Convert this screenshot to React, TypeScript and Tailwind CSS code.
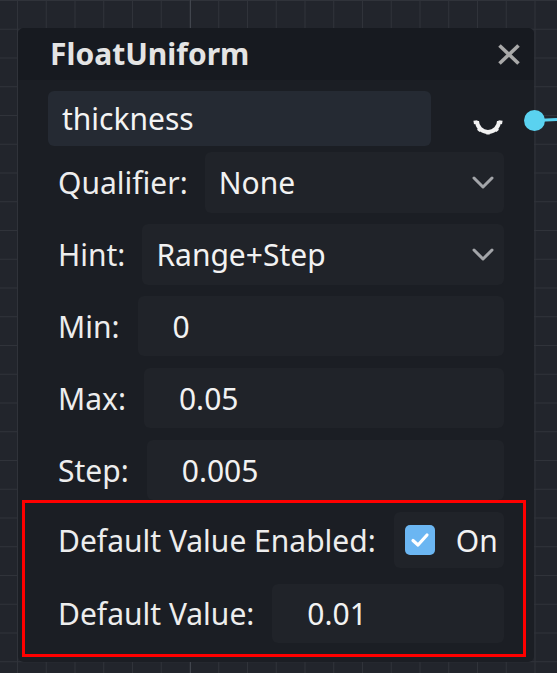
import React from 'react';

const font = { fontFamily: '"Noto Sans", "Open Sans", sans-serif' };

function Chevron() {
  return (
    <svg width="22" height="13" viewBox="0 0 22 13" className="shrink-0">
      <polyline points="2,2 11,11 20,2" fill="none" stroke="#a3a5a9" strokeWidth="3" strokeLinecap="round" strokeLinejoin="round" />
    </svg>
  );
}

function HalfGear() {
  return (
    <svg width="30" height="17" viewBox="0 0 30 17" className="shrink-0">
      <path d="M4 2 A11 11 0 0 0 26 2" fill="none" stroke="#f2f2f2" strokeWidth="4" />
      {[-80, -42, 0, 42, 80].map((a) => (
        <g key={a} transform={`rotate(${a} 15 1)`}>
          <rect x="13.3" y="11.5" width="3.4" height="4" fill="#f2f2f2" />
        </g>
      ))}
    </svg>
  );
}

function SelectRow({ label, value }: { label: string; value: string }) {
  return (
    <div className="flex items-center gap-[17px] pl-[10px] h-[61px]">
      <span className="text-[30px] text-[#ededed] whitespace-nowrap">{label}</span>
      <div className="flex-1 h-full rounded-[6px] bg-[#202329] flex items-center justify-between pl-[14px] pr-[10px]">
        <span className="text-[30px] text-[#f2f2f2]">{value}</span>
        <Chevron />
      </div>
    </div>
  );
}

function NumberRow({ label, value, tall = 60 }: { label: string; value: string; tall?: number }) {
  return (
    <div className={`flex items-center gap-[18px] ${tall === 59 ? 'h-[59px]' : 'h-[60px]'}`}>
      <span className="text-[30px] text-[#ededed] whitespace-nowrap">{label}</span>
      <div className="flex-1 h-full rounded-[6px] bg-[#202329] flex items-center pl-[35px]">
        <span className="text-[30px] text-[#f2f2f2]">{value}</span>
      </div>
    </div>
  );
}

export default function App() {
  return (
    <div
      className="relative w-[557px] h-[673px] overflow-hidden bg-[#22252c] bg-[linear-gradient(to_right,#30333a_1px,transparent_1px),linear-gradient(to_bottom,#30333a_1px,transparent_1px)] bg-[size:28.75px_28.75px] bg-[position:17px_0px]"
      style={font}
    >
      {/* major grid line */}
      <div className="absolute left-[190px] top-0 w-px h-full bg-[#41454d]" />

      {/* edge going out of the node */}
      <svg className="absolute left-[530px] top-[110px]" width="27" height="22" viewBox="0 0 27 22">
        <line x1="5" y1="10.5" x2="27" y2="9.5" stroke="#5ad2f0" strokeWidth="3" />
      </svg>

      {/* node */}
      <div className="absolute left-[18px] top-[28px] w-[516px] h-[634px] rounded-[6px] bg-[#1b1e24] flex flex-col">
        <div className="h-[52px] shrink-0 rounded-t-[6px] bg-[#171a20] flex items-center justify-between pl-[32px] pr-[13px]">
          <span className="text-[30px] font-bold text-[#e4e4e4] leading-none">FloatUniform</span>
          <svg width="24" height="23" viewBox="0 0 24 23">
            <line x1="2.5" y1="2.5" x2="21.5" y2="20.5" stroke="#a9a9a9" strokeWidth="3.6" />
            <line x1="21.5" y1="2.5" x2="2.5" y2="20.5" stroke="#a9a9a9" strokeWidth="3.6" />
          </svg>
        </div>

        <div className="flex flex-col pl-[30px] pr-[30px] pt-[11px]">
          <div className="relative flex items-center h-[55px]">
            <div className="w-[383px] h-full rounded-[6px] bg-[#252a33] flex items-center pl-[14px]">
              <span className="text-[30px] text-[#f4f4f4]">thickness</span>
            </div>
            <div className="ml-[42px] mt-[18px]">
              <HalfGear />
            </div>
            <div className="absolute right-[-41px] top-[19px] w-[21px] h-[21px] rounded-full bg-[#5ad2f0]" />
          </div>

          <div className="flex flex-col gap-[11px] mt-[6px]">
            <SelectRow label="Qualifier:" value="None" />
            <SelectRow label="Hint:" value="Range+Step" />
            <div className="pl-[10px] flex flex-col gap-[12px]">
              <NumberRow label="Min:" value="0" />
              <NumberRow label="Max:" value="0.05" />
              <NumberRow label="Step:" value="0.005" />
            </div>
          </div>

          <div className="-ml-[26px] -mr-[22px] border-[3px] border-[#ff0000] pl-[33px] pr-[19px] pt-[9px] pb-[11px] flex flex-col gap-[16px]">
            <div className="flex items-center gap-[18px] h-[56px]">
              <span className="text-[30px] text-[#ededed] whitespace-nowrap">Default Value Enabled:</span>
              <div className="flex-1 h-full rounded-[6px] bg-[#202329] flex items-center pl-[11px] gap-[21px]">
                <div className="w-[30px] h-[30px] rounded-[5px] bg-[#6bb6f2] flex items-center justify-center">
                  <svg width="20" height="16" viewBox="0 0 20 16">
                    <polyline points="3,8.5 8,13 17,3" fill="none" stroke="#ffffff" strokeWidth="3.2" strokeLinecap="round" strokeLinejoin="round" />
                  </svg>
                </div>
                <span className="text-[30px] text-[#f2f2f2]">On</span>
              </div>
            </div>
            <NumberRow label="Default Value:" value="0.01" tall={59} />
          </div>
        </div>
      </div>
    </div>
  );
}
